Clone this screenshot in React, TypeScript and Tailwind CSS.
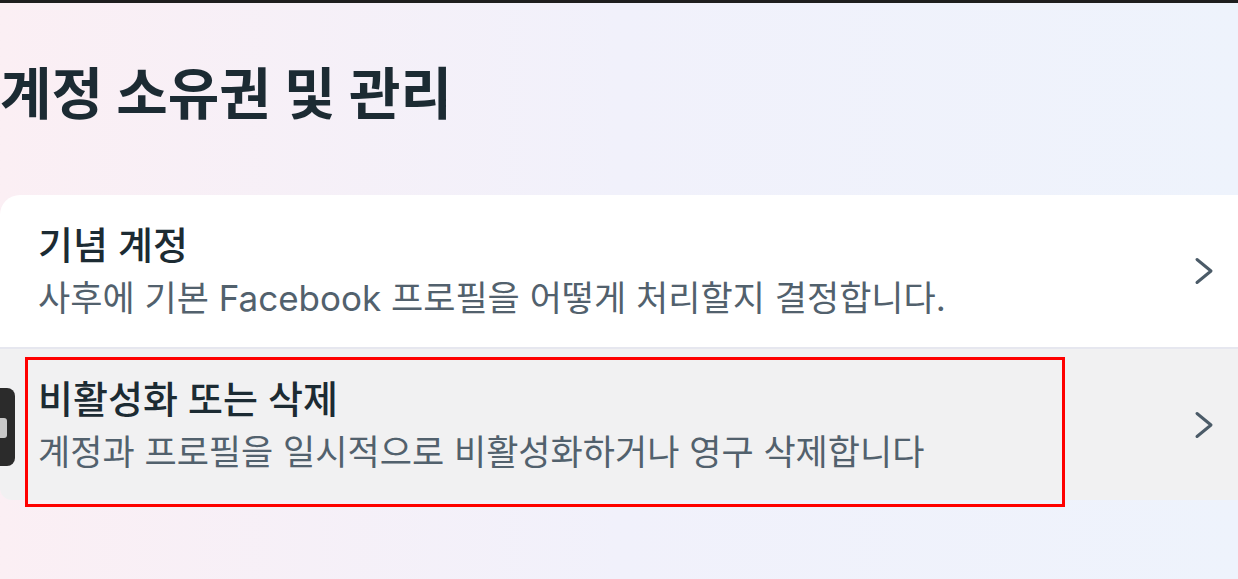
const font = 'font-["Inter","Noto_Sans_CJK_KR",sans-serif]';

type Item = {
  title: string;
  desc: string;
  active?: boolean;
};

const items: Item[] = [
  { title: '기념 계정', desc: '사후에 기본 Facebook 프로필을 어떻게 처리할지 결정합니다.' },
  { title: '비활성화 또는 삭제', desc: '계정과 프로필을 일시적으로 비활성화하거나 영구 삭제합니다', active: true },
];

function Chevron() {
  return (
    <svg width="22" height="30" viewBox="0 0 22 30" fill="none" className="shrink-0">
      <path d="M3 3.5 L17 15 L3 26.5" stroke="#4b5b68" strokeWidth="3" strokeLinecap="round" strokeLinejoin="round" />
    </svg>
  );
}

function Row({ item }: { item: Item }) {
  return (
    <div
      className={`relative flex items-center justify-between pl-[38px] pr-[22px] ${
        item.active ? 'bg-[#f1f1f2] pt-[27px] pb-[26px]' : 'bg-white pt-[27px] pb-[27px] border-b-2 border-[#e6e7ef]'
      }`}
    >
      <div className="flex flex-col gap-[8px]">
        <div className="text-[38px] leading-[46px] font-medium text-[#1c2b33]">{item.title}</div>
        <div className="text-[35px] leading-[44px] text-[#52616d]">{item.desc}</div>
      </div>
      <Chevron />
    </div>
  );
}

export default function App() {
  return (
    <div
      className={`relative w-[1238px] h-[579px] overflow-hidden bg-gradient-to-r from-[#fbeff4] via-[#f1f1fb] to-[#eef3fc] ${font}`}
    >
      <div className="h-[3px] bg-[#1e1e1e]" />
      <h1 className="mt-[58px] text-[56px] leading-[66px] font-bold text-[#1c2b33] whitespace-nowrap">
        계정 소유권 및 관리
      </h1>
      <div className="relative mt-[68px]">
        <div className="rounded-tl-[20px] rounded-bl-[12px] overflow-hidden">
          {items.map((item) => (
            <Row key={item.title} item={item} />
          ))}
        </div>
        {/* red highlight drawn over the second row */}
        <div className="absolute left-[25px] top-[162px] w-[1040px] h-[150px] border-[3px] border-[#ff0000] pointer-events-none" />
      </div>
      <div className="absolute left-0 top-[388px] w-[15px] h-[78px] rounded-r-[8px] bg-[#2b2b2b]">
        <div className="absolute left-0 top-[30px] w-[7px] h-[20px] rounded-r-[3px] bg-[#c9c9c9]" />
      </div>
    </div>
  );
}
